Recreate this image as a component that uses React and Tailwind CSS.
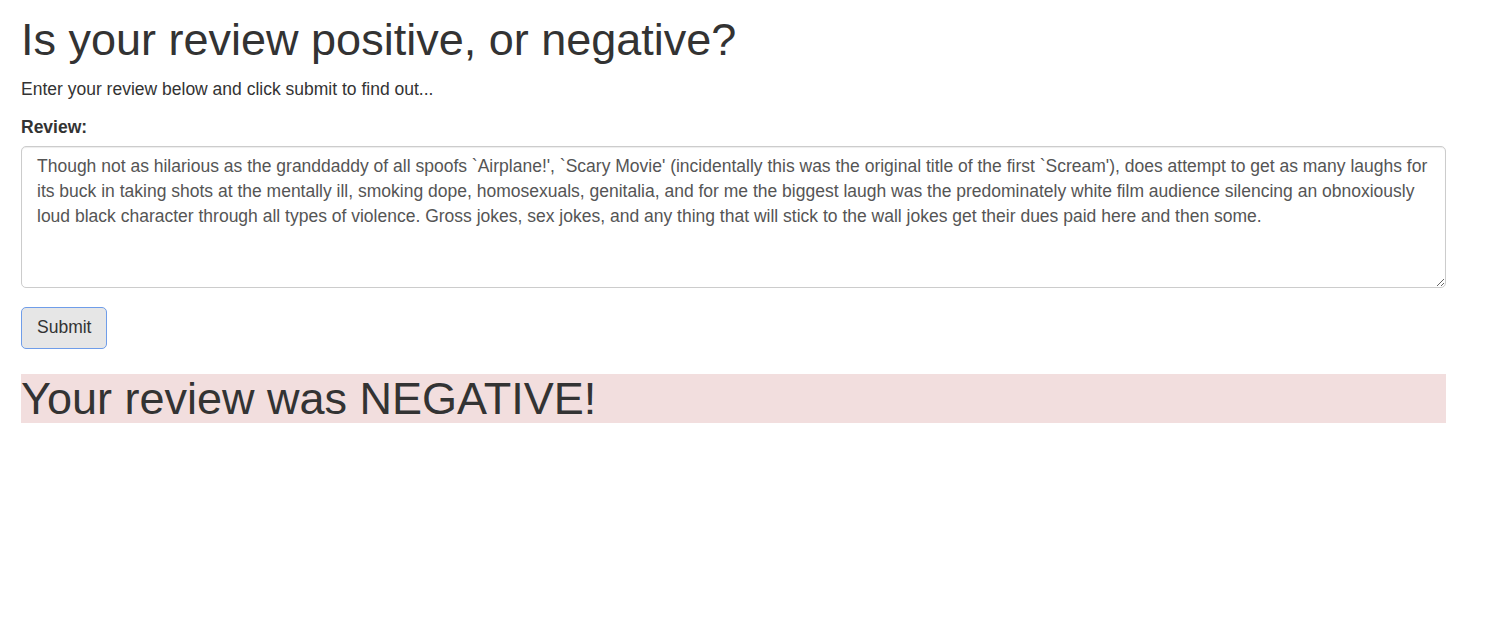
import React from 'react';

const review =
  "Though not as hilarious as the granddaddy of all spoofs `Airplane!', `Scary Movie' (incidentally this was the original title of the first `Scream'), does attempt to get as many laughs for its buck in taking shots at the mentally ill, smoking dope, homosexuals, genitalia, and for me the biggest laugh was the predominately white film audience silencing an obnoxiously loud black character through all types of violence. Gross jokes, sex jokes, and any thing that will stick to the wall jokes get their dues paid here and then some.";

const App = () => {
  return (
    <div className="min-h-[622px] bg-white text-[#333] font-['Liberation_Sans',Arial,sans-serif] text-[17.5px] leading-[25px]">
      <div className="w-[1425px] ml-[21px]">
        {/* Heading */}
        <h1 className="mt-[15px] mb-[12.5px] text-[45px] leading-[49.5px] font-normal">
          Is your review positive, or negative?
        </h1>
        <p className="mb-[12.5px]">Enter your review below and click submit to find out...</p>

        {/* Form */}
        <form onSubmit={(e) => e.preventDefault()}>
          <div className="mb-[18.75px]">
            <label htmlFor="review" className="block mb-[6.25px] font-bold">
              Review:
            </label>
            <textarea
              id="review"
              rows={5}
              defaultValue={review}
              className="block w-full h-[142px] px-[15px] py-[7.5px] border border-[#ccc] rounded-[5px] text-[#555] text-[17.5px] leading-[25px] font-['Liberation_Sans',Arial,sans-serif] shadow-[inset_0_1px_1px_rgba(0,0,0,0.075)] outline-none"
            />
          </div>
          <button
            type="submit"
            className="block h-[42px] px-[15px] py-[7.5px] bg-[#e6e6e6] border border-[#6f9de9] rounded-[5px] text-[#333] text-[17.5px] leading-[25px]"
          >
            Submit
          </button>
        </form>

        {/* Result */}
        <h1 className="mt-[25px] text-[45px] leading-[49.5px] font-normal bg-[#f2dede]">
          Your review was NEGATIVE!
        </h1>
      </div>
    </div>
  );
};

export default App;
